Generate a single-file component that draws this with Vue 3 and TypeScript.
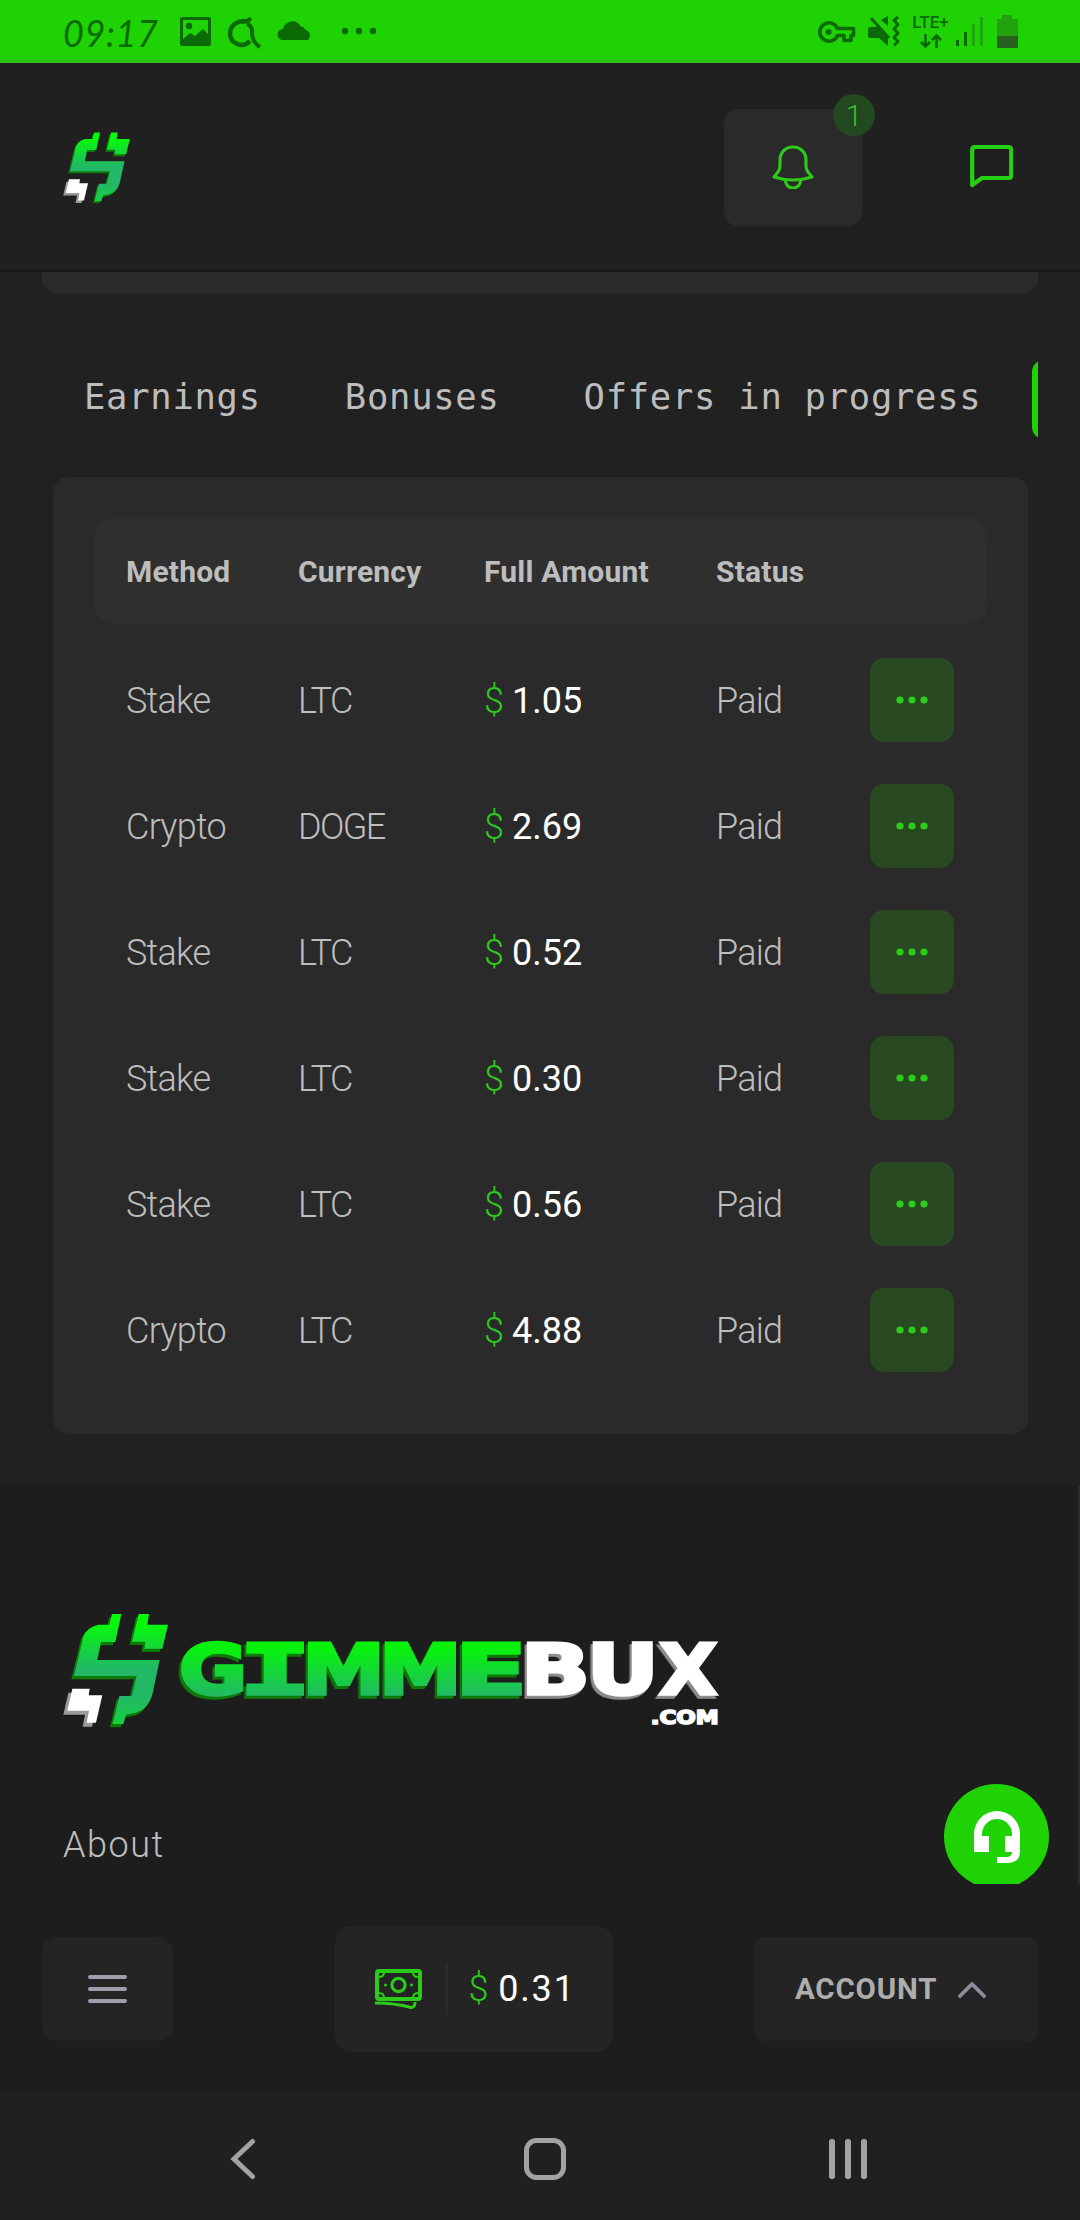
<script setup lang="ts">
interface Payout {
  method: string
  currency: string
  amount: string
  status: string
}

interface Glyph {
  char: string
  x: number
  width: number
  slab?: boolean
}

const tabs: string[] = ['Earnings', 'Bonuses', 'Offers in progress']
const columns: string[] = ['Method', 'Currency', 'Full Amount', 'Status']

const payouts: Payout[] = [
  { method: 'Stake', currency: 'LTC', amount: '1.05', status: 'Paid' },
  { method: 'Crypto', currency: 'DOGE', amount: '2.69', status: 'Paid' },
  { method: 'Stake', currency: 'LTC', amount: '0.52', status: 'Paid' },
  { method: 'Stake', currency: 'LTC', amount: '0.30', status: 'Paid' },
  { method: 'Stake', currency: 'LTC', amount: '0.56', status: 'Paid' },
  { method: 'Crypto', currency: 'LTC', amount: '4.88', status: 'Paid' },
]

// Brand mark: green "S" body, its upper right arm, and the white lower left block
const markBody =
  'M216 72H244L226 156H183L172 210H359L338 310Q325 360 285 368L258 374L250 402H218L238 318H275L290 258H102L130 140Q140 112 175 104H208Z'
const markArm = 'M296 72H327L322 104H384L367 176H313L316 155H276Z'
const markBlock = 'M97 296H149L146 316H187L168 398H140L147 362H82Z'

const greenGlyphs: Glyph[] = [
  { char: 'G', x: 417, width: 205 },
  { char: 'I', x: 598, width: 216, slab: true },
  { char: 'M', x: 787, width: 248 },
  { char: 'M', x: 1017, width: 248 },
  { char: 'E', x: 1245, width: 216 },
]
const whiteGlyphs: Glyph[] = [
  { char: 'B', x: 1442, width: 208 },
  { char: 'U', x: 1640, width: 216 },
  { char: 'X', x: 1858, width: 174 },
]
</script>

<template>
  <div class="screen">
    <div class="status-bar">
      <span class="clock">09:17</span>
      <svg class="status-left" width="210" height="63" viewBox="172 0 210 63">
        <g fill="#0b6a06">
          <path fill-rule="evenodd" d="M182 17h27q2 0 2 2v25q0 2-2 2h-27q-2 0-2-2V19q0-2 2-2zM183 20v19l7-6 5 3 8-7 5 5V20z" />
          <circle cx="189" cy="26" r="3.2" />
          <path d="M287 40h-4a5.500 5.500 0 0 1 0-11a9.500 9.500 0 0 1 17.500-3a7 7 0 0 1 5 4a5.500 5.500 0 0 1 2 10z" />
          <circle cx="345" cy="31" r="3.200" /><circle cx="359" cy="31" r="3.200" /><circle cx="373" cy="31" r="3.200" />
        </g>
        <path d="M250 21.500C238 19 230 25 230 34a11.500 11.500 0 0 0 20 7" fill="none" stroke="#0b6a06" stroke-width="4.500" />
        <path d="M242 21.500q5 1 9-3.500M247 24q6 2 5 10q1 9 8 13" fill="none" stroke="#0b6a06" stroke-width="4" />
      </svg>
      <svg class="status-right" width="95" height="63" viewBox="812 0 95 63">
        <g fill="none" stroke="#0b6a06">
          <path d="M837.500 28.500a9.200 9.200 0 1 0 0 7h6.500v5h7v-5h2.500v-7z" stroke-width="3.600" stroke-linejoin="round" />
          <circle cx="828.500" cy="32" r="3" fill="#0b6a06" stroke="none" />
          <path d="M871 18l18 20" stroke-width="3" />
          <path d="M898 17l-4 3.500 4 4-4 4.500 4 4-4 4.500 4 4-4 4" stroke-width="3" stroke-linejoin="round" />
        </g>
        <path fill="#0b6a06" d="M868 29q0-2 2-2h5l3-1l10 12v8l-9-8h-8q-3 0-3-2zM881 20l7-4v10z" />
      </svg>
      <div class="network">
        <span>LTE+</span>
        <svg width="22" height="14" viewBox="0 0 22 14"><path d="M5.500 0v12M1 8l4.500 4.500L10 8M16.500 14V2M12 6l4.500-4.500L21 6" fill="none" stroke="#0b6a06" stroke-width="2.600" /></svg>
      </div>
      <svg class="signal" width="65" height="63" viewBox="954 0 65 63">
        <path d="M956 40h3v6h-3zM964 32h3v14h-3z" fill="#0b6a06" />
        <path d="M972 24h3v22h-3zM980 17h3v29h-3z" fill="#1aa80a" />
        <path d="M1002 15h10v4h6v17h-21V19h5z" fill="#22a010" />
        <path d="M997 36h21v12h-21z" fill="#286020" />
      </svg>
    </div>

    <header class="top-bar">
      <svg class="mark" width="67" height="71" viewBox="69 70 316 340" preserveAspectRatio="none">
        <defs>
          <linearGradient id="markGreen" gradientUnits="userSpaceOnUse" x1="0" y1="72" x2="0" y2="400">
            <stop offset="0.1" stop-color="#06f80c" />
            <stop offset="0.5" stop-color="#22b866" />
            <stop offset="0.75" stop-color="#22b866" />
            <stop offset="1" stop-color="#16d040" />
          </linearGradient>
        </defs>
        <g transform="translate(-8 10)">
          <path :d="markBody" fill="#0d7a08" /><path :d="markArm" fill="#0d7a08" />
        </g>
        <path :d="markBlock" fill="#9b9b9b" transform="translate(-12 12)" />
        <path :d="markBody" fill="url(#markGreen)" /><path :d="markArm" fill="url(#markGreen)" /><path :d="markBlock" fill="#fff" />
      </svg>
      <div class="bell-button">
        <svg width="42" height="44" viewBox="0 0 42 44" fill="none" stroke="#2dc81b" stroke-width="3.200" stroke-linejoin="round">
          <path d="M21 2C13 2 8 8 8 15v6c0 5-3 7-6 11q19 6 38 0c-3-4-6-6-6-11v-6C34 8 29 2 21 2z" />
          <path d="M13.500 35.500a7.500 7.500 0 0 0 15 0" />
        </svg>
        <span class="badge">1</span>
      </div>
      <svg class="chat" width="43" height="44" viewBox="0 0 43 44">
        <path d="M2.200 40V5q0-3 3-3h33q3 0 3 3v25q0 3-3 3H12z" fill="none" stroke="#25cf12" stroke-width="4.200" stroke-linejoin="round" />
      </svg>
    </header>

    <main class="content">
      <div class="card-tail"></div>
      <nav class="tabs">
        <span v-for="tab in tabs" :key="tab" class="tab">{{ tab }}</span>
        <span class="tab-active"></span>
      </nav>

      <section class="payouts">
        <div class="row head">
          <span v-for="column in columns" :key="column">{{ column }}</span>
        </div>
        <div v-for="(payout, i) in payouts" :key="i" class="row">
          <span>{{ payout.method }}</span>
          <span class="code">{{ payout.currency }}</span>
          <span class="money"><i>$</i>{{ payout.amount }}</span>
          <span>{{ payout.status }}</span>
          <button class="more" type="button">
            <svg width="32" height="8" viewBox="0 0 32 8" fill="#2bcd18"><circle cx="4" cy="4" r="3.600" /><circle cx="16" cy="4" r="3.600" /><circle cx="28" cy="4" r="3.600" /></svg>
          </button>
        </div>
      </section>
    </main>

    <footer class="footer">
      <svg class="brand" width="664" height="120" viewBox="60 60 1992 360">
        <defs>
          <linearGradient id="wordGreen" gradientUnits="userSpaceOnUse" x1="0" y1="153" x2="0" y2="320">
            <stop offset="0.15" stop-color="#08f20e" />
            <stop offset="1" stop-color="#22b866" />
          </linearGradient>
        </defs>
        <g transform="translate(-8 10)">
          <path :d="markBody" fill="#0d7a08" /><path :d="markArm" fill="#0d7a08" />
        </g>
        <path :d="markBlock" fill="#9b9b9b" transform="translate(-12 12)" />
        <path :d="markBody" fill="url(#markGreen)" /><path :d="markArm" fill="url(#markGreen)" /><path :d="markBlock" fill="#fff" />
        <text class="word green" y="312"><tspan v-for="(g, i) in greenGlyphs" :key="i" :class="{ slab: g.slab }" :x="g.x" :textLength="g.width" lengthAdjust="spacingAndGlyphs">{{ g.char }}</tspan></text>
        <text class="word white" y="312"><tspan v-for="(g, i) in whiteGlyphs" :key="i" :x="g.x" :textLength="g.width" lengthAdjust="spacingAndGlyphs">{{ g.char }}</tspan></text>
        <text class="domain" x="1832" y="401" textLength="204" lengthAdjust="spacingAndGlyphs">.COM</text>
      </svg>
      <a class="about">About</a>
      <div class="support">
        <svg width="46" height="52" viewBox="0 0 46 52">
          <path fill="#fff" d="M0 23a23 23 0 0 1 46 0v17q0 12-13 12H23v-6h9q6 0 6-5h-7V25h7v-2a15 15 0 0 0-30 0v2h7v16H0z" />
        </svg>
      </div>
      <div class="scroll-thumb"></div>
    </footer>

    <div class="bottom-bar">
      <div class="menu-button"><i></i><i></i><i></i></div>
      <div class="balance">
        <svg width="47" height="40" viewBox="0 0 47 40" fill="none" stroke="#2bcb1a" stroke-linejoin="round">
          <rect x="2" y="2" width="43" height="28" rx="2" stroke-width="4" />
          <path d="M4 8q5 0 5-5M43 8q-5 0-5-5M4 24q5 0 5 5M43 24q-5 0-5 5" stroke-width="2" />
          <circle cx="23.500" cy="16" r="6.600" stroke-width="3.200" />
          <path d="M0 34q20 0 36 4.500q4 0 4-5.500" stroke-width="3" />
          <circle cx="10.500" cy="16" r="1.500" fill="#2bcb1a" stroke="none" /><circle cx="36.500" cy="16" r="1.500" fill="#2bcb1a" stroke="none" />
        </svg>
        <span class="divider"></span>
        <span class="money wide"><i>$</i>0.31</span>
      </div>
      <div class="account">
        <span>ACCOUNT</span>
        <svg width="28" height="17" viewBox="0 0 28 17"><path d="M2 15L14 3l12 12" fill="none" stroke="#8e8d9c" stroke-width="3.800" stroke-linecap="round" stroke-linejoin="round" /></svg>
      </div>
    </div>

    <div class="system-nav">
      <svg width="26" height="42" viewBox="0 0 26 42"><path d="M22.500 3.500L4 21l18.500 17.500" fill="none" stroke="#a2a2a2" stroke-width="5" stroke-linecap="round" /></svg>
      <svg width="44" height="42" viewBox="0 0 44 42"><rect x="3.500" y="2.500" width="37" height="37" rx="10" fill="none" stroke="#a2a2a2" stroke-width="5" /></svg>
      <svg width="39" height="40" viewBox="0 0 39 40" fill="#a2a2a2"><rect width="6" height="40" rx="2.500" /><rect x="16" width="6" height="40" rx="2.500" /><rect x="32" width="6" height="40" rx="2.500" /></svg>
    </div>
  </div>
</template>

<style>
body {
  margin: 0;
  background: #212121;
}
</style>

<style scoped>
.screen {
  position: relative;
  width: 1080px;
  height: 2220px;
  overflow: hidden;
  display: flex;
  flex-direction: column;
  background: #212121;
  color: #bdbdbd;
  font-family: Roboto, "Noto Sans", sans-serif;
}
svg {
  display: block;
  flex: none;
}
.status-bar {
  height: 63px;
  flex: none;
  display: flex;
  background: linear-gradient(#1fd204 55px, #29c610 60px, #32bb1e);
}
.clock {
  box-sizing: border-box;
  width: 172px;
  padding-left: 63px;
  font: italic 400 36px/66px Lato, sans-serif;
  letter-spacing: 0.600px;
  color: #0b6a06;
}
.status-right {
  margin-left: 430px;
}
.network {
  width: 47px;
  display: flex;
  flex-direction: column;
  align-items: center;
  padding-top: 14px;
  gap: 4px;
  box-sizing: border-box;
  color: #0b6a06;
}
.network span {
  font: 500 17px/16px Roboto, sans-serif;
}
.top-bar {
  height: 209px;
  box-sizing: border-box;
  flex: none;
  display: flex;
  align-items: center;
  padding: 1px 67px 0 63px;
  border-bottom: 2px solid #171717;
  background: #202020;
}
.bell-button {
  position: relative;
  margin-left: auto;
  width: 138px;
  height: 117px;
  border-radius: 14px;
  background: #2a2a2a;
  display: flex;
  align-items: center;
  justify-content: center;
}
.badge {
  position: absolute;
  right: -13px;
  top: -15px;
  width: 42px;
  height: 42px;
  border-radius: 50%;
  background: #22491f;
  color: #35c524;
  font-size: 30px;
  font-weight: 350;
  line-height: 44px;
  text-align: center;
}
.chat {
  margin-left: 108px;
}
.content {
  height: 1214px;
  flex: none;
}
.card-tail {
  height: 22px;
  margin: 0 42px;
  border-radius: 0 0 16px 16px;
  background: #2a2a2a;
}
.tabs {
  display: flex;
  align-items: flex-start;
  height: 79px;
  margin: 66px 42px 0;
  overflow: hidden;
  font-family: "DejaVu Sans Mono", monospace;
  font-size: 35.500px;
  letter-spacing: 0.730px;
  white-space: pre;
}
.tab {
  flex: none;
  padding: 0 42px;
  line-height: 74px;
}
.tab-active {
  flex: none;
  width: 200px;
  height: 79px;
  margin-left: 9px;
  border-radius: 12px;
  background: #1fd204;
}
.payouts {
  box-sizing: border-box;
  height: 957px;
  margin: 38px 52px 0 53px;
  padding: 41px;
  border-radius: 15px;
  background: #2a2a2a;
}
.row {
  display: grid;
  grid-template-columns: 172px 186px 232px 154px 84px;
  align-items: center;
  height: 126px;
  padding-left: 32px;
  font-size: 36px;
  font-weight: 350;
  letter-spacing: -0.750px;
  white-space: nowrap;
}
.row > span {
  padding-top: 1px;
}
.head {
  height: 106px;
  margin-bottom: 13px;
  border-radius: 20px;
  background: #2f2f2f;
  font-size: 30px;
  font-weight: 700;
  letter-spacing: 0.200px;
}
.code {
  letter-spacing: -1.600px;
}
.money {
  color: #fff;
  font-weight: 400;
  letter-spacing: 0;
}
.money i {
  margin-right: 8px;
  color: #2dc81c;
  font-style: normal;
  font-weight: 350;
}
.more {
  display: flex;
  align-items: center;
  justify-content: center;
  width: 84px;
  height: 84px;
  border: 0;
  border-radius: 14px;
  background: #284922;
}
.footer {
  position: relative;
  box-sizing: border-box;
  height: 398px;
  flex: none;
  padding: 124px 60px 0;
  overflow: hidden;
  background: #1d1d1d;
}
.word {
  font-family: "DejaVu Sans", sans-serif;
  font-weight: 700;
  font-size: 208px;
  stroke-width: 10px;
  stroke-linejoin: miter;
}
.slab {
  font-family: "DejaVu Sans Mono", monospace;
}
.green {
  fill: url(#wordGreen);
  stroke: url(#wordGreen);
  filter: drop-shadow(-7px 9px 0 #0d7a08);
}
.white {
  fill: #fff;
  stroke: #fff;
  filter: drop-shadow(-7px 9px 0 #8b8b8b);
}
.domain {
  fill: #fff;
  stroke: #fff;
  stroke-width: 5px;
  font: 700 58px "DejaVu Sans", sans-serif;
}
.about {
  display: block;
  margin: 91px 0 0 3px;
  font-size: 36px;
  font-weight: 350;
  line-height: 48px;
  letter-spacing: 1.500px;
}
.support {
  position: absolute;
  left: 944px;
  top: 298px;
  width: 105px;
  height: 105px;
  border-radius: 50%;
  background: #1fd204;
  display: flex;
  align-items: center;
  justify-content: center;
}
.scroll-thumb {
  position: absolute;
  right: 0;
  top: 0;
  width: 2px;
  height: 398px;
  background: #2b2b2b;
}
.bottom-bar {
  box-sizing: border-box;
  height: 208px;
  flex: none;
  display: flex;
  align-items: center;
  justify-content: space-between;
  padding: 2px 42px 0;
  background: #1d1d1d;
}
.menu-button {
  width: 131px;
  height: 104px;
  border-radius: 15px;
  background: #242424;
  display: flex;
  flex-direction: column;
  align-items: center;
  justify-content: center;
  gap: 8px;
}
.menu-button i {
  width: 39px;
  height: 4px;
  border-radius: 2px;
  background: #a09eac;
}
.balance {
  box-sizing: border-box;
  width: 278px;
  height: 126px;
  margin-left: 20px;
  padding-left: 40px;
  border-radius: 16px;
  background: #242424;
  display: flex;
  align-items: center;
}
.divider {
  width: 2px;
  height: 52px;
  margin: 0 21px 0 24px;
  background: #2c2c2c;
}
.wide {
  font-size: 36px;
  letter-spacing: 1.800px;
}
.account {
  box-sizing: border-box;
  width: 284px;
  height: 104px;
  border-radius: 11px;
  background: #242424;
  display: flex;
  align-items: center;
  padding-left: 41px;
  gap: 21px;
  color: #adadad;
  font-size: 29.500px;
  font-weight: 700;
  letter-spacing: 0.800px;
}
.system-nav {
  box-sizing: border-box;
  height: 128px;
  flex: none;
  display: flex;
  align-items: center;
  padding: 5px 0 0 230px;
  border-top: 1px solid #1a1a1a;
  background: #202020;
}
.system-nav svg + svg {
  margin-left: 267px;
}
.system-nav svg:last-child {
  margin-left: 262px;
}
</style>
